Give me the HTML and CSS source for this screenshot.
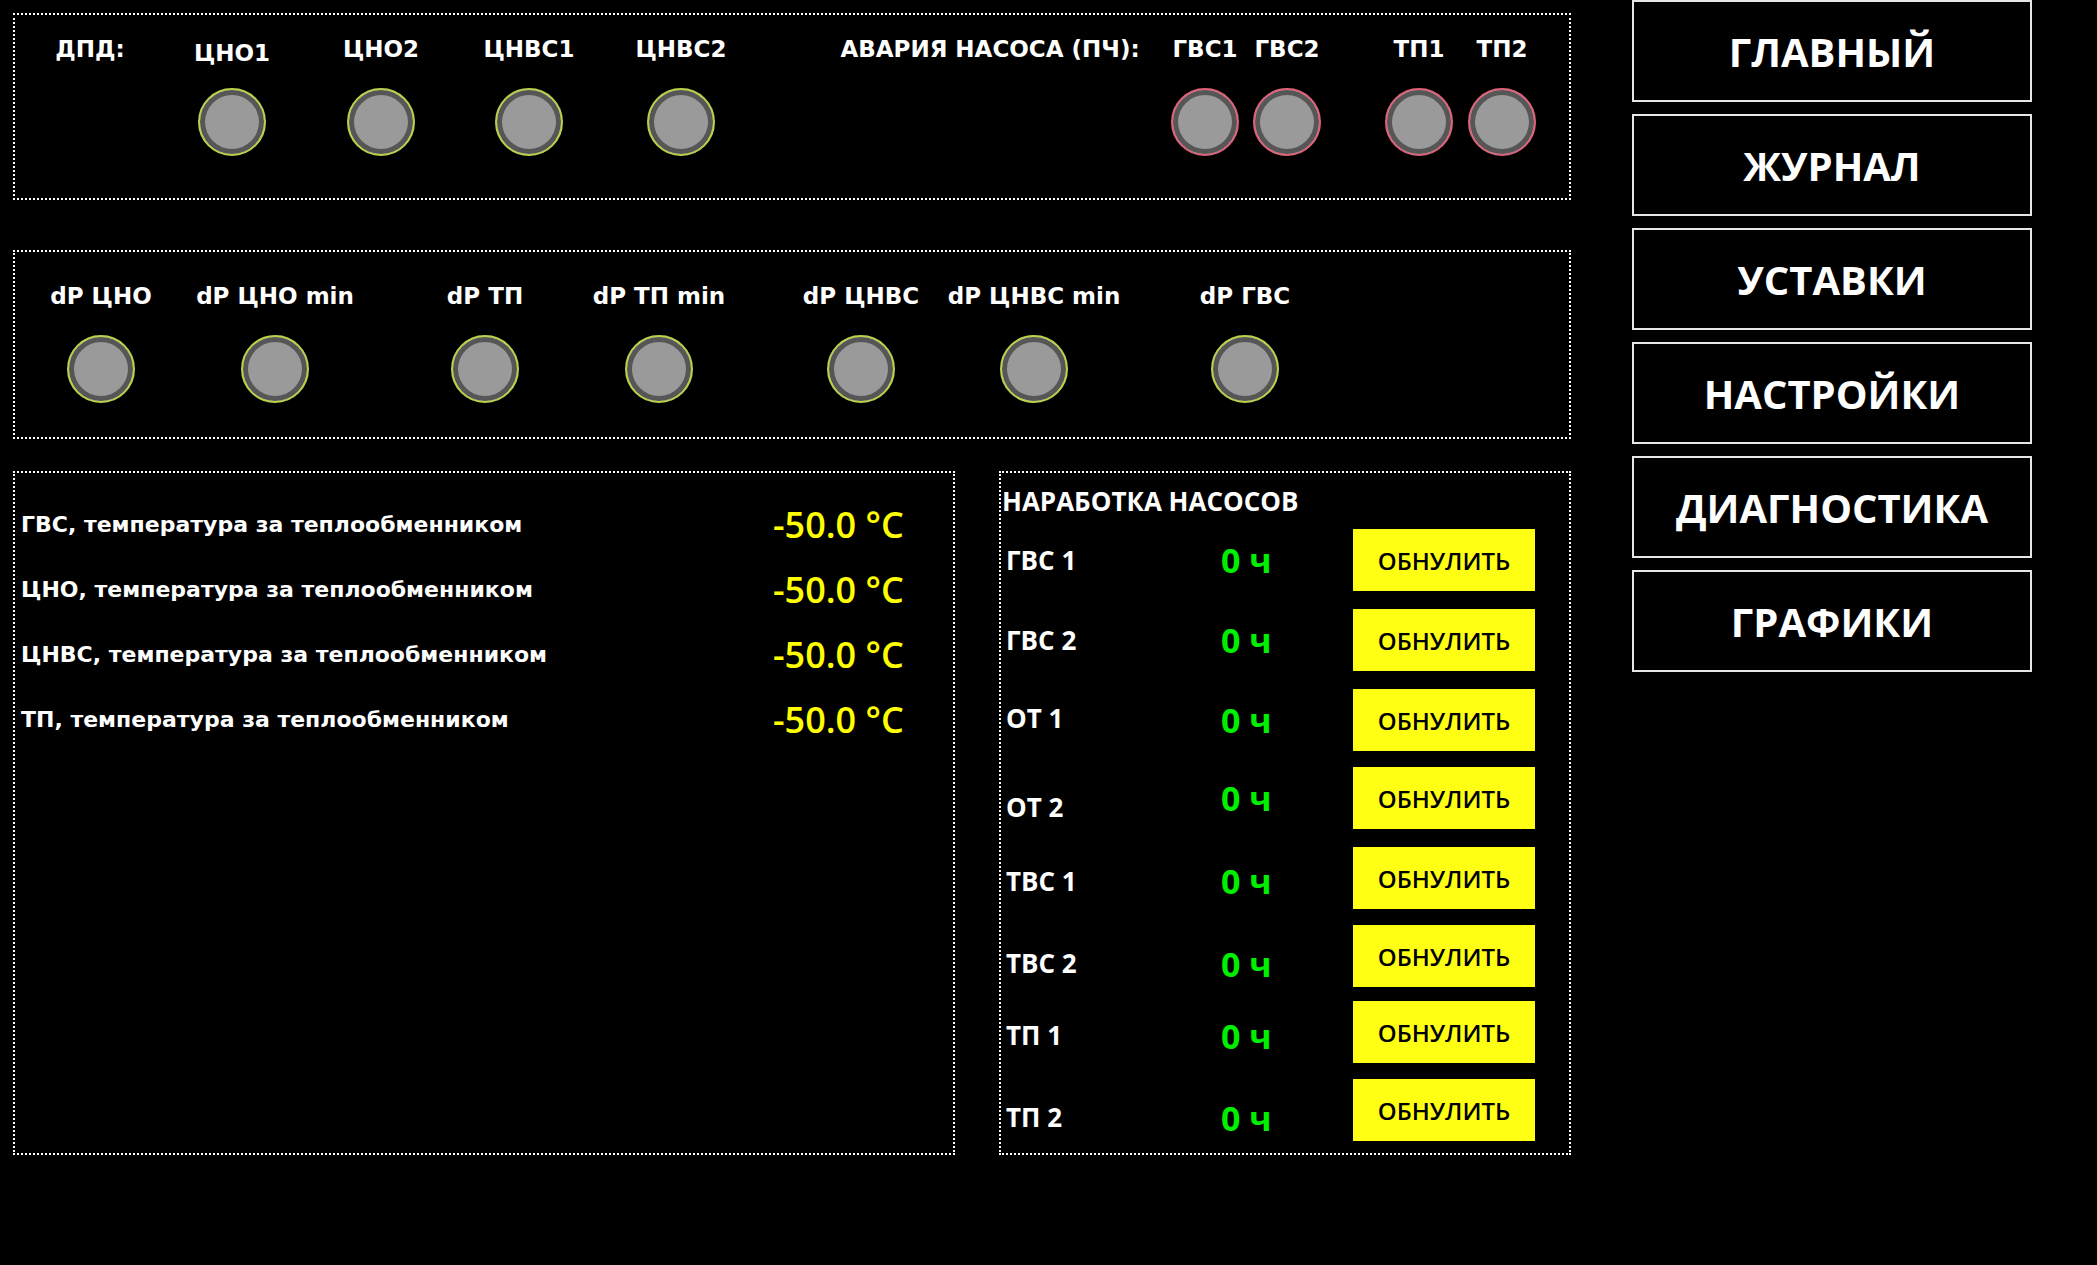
FILE: index.html
```html
<!DOCTYPE html>
<html lang="ru">
<head>
<meta charset="utf-8">
<title>Насосная станция</title>
<link rel="stylesheet" href="styles.css">
</head>
<body>
<div class="screen">
  <div class="main">
    <section class="panel p-top">
      <div class="ind x-dpd"><span class="lbl">ДПД:</span></div>
      <div class="ind x-cno1"><span class="lbl low">ЦНО1</span><span class="lamp"></span></div>
      <div class="ind x-cno2"><span class="lbl">ЦНО2</span><span class="lamp"></span></div>
      <div class="ind x-cnvs1"><span class="lbl">ЦНВС1</span><span class="lamp"></span></div>
      <div class="ind x-cnvs2"><span class="lbl">ЦНВС2</span><span class="lamp"></span></div>
      <div class="ind x-avar"><span class="lbl">АВАРИЯ НАСОСА (ПЧ):</span></div>
      <div class="ind x-gvs1"><span class="lbl">ГВС1</span><span class="lamp alarm"></span></div>
      <div class="ind x-gvs2"><span class="lbl">ГВС2</span><span class="lamp alarm"></span></div>
      <div class="ind x-tp1"><span class="lbl">ТП1</span><span class="lamp alarm"></span></div>
      <div class="ind x-tp2"><span class="lbl">ТП2</span><span class="lamp alarm"></span></div>
    </section>

    <section class="panel p-dp">
      <div class="ind y-1"><span class="lbl">dP ЦНО</span><span class="lamp"></span></div>
      <div class="ind y-2"><span class="lbl">dP ЦНО min</span><span class="lamp"></span></div>
      <div class="ind y-3"><span class="lbl">dP ТП</span><span class="lamp"></span></div>
      <div class="ind y-4"><span class="lbl">dP ТП min</span><span class="lamp"></span></div>
      <div class="ind y-5"><span class="lbl">dP ЦНВС</span><span class="lamp"></span></div>
      <div class="ind y-6"><span class="lbl">dP ЦНВС min</span><span class="lamp"></span></div>
      <div class="ind y-7"><span class="lbl">dP ГВС</span><span class="lamp"></span></div>
    </section>

    <div class="bottom">
      <section class="panel p-temp">
        <div class="t-row"><span class="t-name">ГВС, температура за теплообменником</span><span class="t-val">-50.0 °C</span></div>
        <div class="t-row"><span class="t-name">ЦНО, температура за теплообменником</span><span class="t-val">-50.0 °C</span></div>
        <div class="t-row"><span class="t-name">ЦНВС, температура за теплообменником</span><span class="t-val">-50.0 °C</span></div>
        <div class="t-row"><span class="t-name">ТП, температура за теплообменником</span><span class="t-val">-50.0 °C</span></div>
      </section>

      <section class="panel p-run">
        <div class="run-title">НАРАБОТКА НАСОСОВ</div>
        <div class="run-list">
          <div class="run-row"><span class="run-name">ГВС 1</span><span class="run-val">0 ч</span><button class="run-btn">ОБНУЛИТЬ</button></div>
          <div class="run-row g18"><span class="run-name">ГВС 2</span><span class="run-val">0 ч</span><button class="run-btn">ОБНУЛИТЬ</button></div>
          <div class="run-row g18"><span class="run-name up2">ОТ 1</span><span class="run-val">0 ч</span><button class="run-btn">ОБНУЛИТЬ</button></div>
          <div class="run-row g16"><span class="run-name dn9">ОТ 2</span><span class="run-val">0 ч</span><button class="run-btn">ОБНУЛИТЬ</button></div>
          <div class="run-row g18"><span class="run-name dn3">ТВС 1</span><span class="run-val dn3">0 ч</span><button class="run-btn">ОБНУЛИТЬ</button></div>
          <div class="run-row g16"><span class="run-name dn7">ТВС 2</span><span class="run-val dn8">0 ч</span><button class="run-btn">ОБНУЛИТЬ</button></div>
          <div class="run-row g14"><span class="run-name dn3">ТП 1</span><span class="run-val dn4">0 ч</span><button class="run-btn">ОБНУЛИТЬ</button></div>
          <div class="run-row g16"><span class="run-name dn7">ТП 2</span><span class="run-val dn8">0 ч</span><button class="run-btn">ОБНУЛИТЬ</button></div>
        </div>
      </section>
    </div>
  </div>

  <nav class="nav">
    <a class="nav-btn">ГЛАВНЫЙ</a>
    <a class="nav-btn">ЖУРНАЛ</a>
    <a class="nav-btn">УСТАВКИ</a>
    <a class="nav-btn">НАСТРОЙКИ</a>
    <a class="nav-btn">ДИАГНОСТИКА</a>
    <a class="nav-btn">ГРАФИКИ</a>
  </nav>
</div>
</body>
</html>
```

FILE: styles.css
```css
* { box-sizing: border-box; }

html, body {
  margin: 0;
  background: #000;
}

body {
  width: 2097px;
  height: 1265px;
  overflow: hidden;
  color: #fff;
  font-family: "Open Sans", "DejaVu Sans", sans-serif;
}

.screen {
  display: flex;
  align-items: flex-start;
}

.main {
  width: 1558px;
  margin: 13px 0 0 13px;
  display: flex;
  flex-direction: column;
}

.panel {
  border: 2px dotted #fff;
}

/* ---------- indicator panels ---------- */
.p-top {
  height: 187px;
  display: flex;
  padding-top: 20px;
}

.p-dp {
  height: 189px;
  margin-top: 50px;
  display: flex;
  padding-top: 30px;
}

.ind {
  flex: none;
  width: 80px;
  display: flex;
  flex-direction: column;
  align-items: center;
}

.lbl {
  font-family: "DejaVu Sans", sans-serif;
  font-weight: bold;
  font-size: 23px;
  line-height: 28px;
  height: 32px;
  white-space: nowrap;
  color: #fff;
}

.lbl.low { padding-top: 4px; }

.lamp {
  width: 68px;
  height: 68px;
  margin-top: 21px;
  border-radius: 50%;
  border: 2px solid #b8d24a;
  background: #9a9a9a;
  box-shadow: inset 0 0 0 5px #565656;
}

.lamp.alarm { border-color: #e0627a; }

/* horizontal placement of the indicators (centres of the widgets) */
.x-dpd   { margin-left: 35px; }
.x-cno1  { margin-left: 62px; }
.x-cno2  { margin-left: 69px; }
.x-cnvs1 { margin-left: 68px; }
.x-cnvs2 { margin-left: 72px; }
.x-avar  { margin-left: 229px; }
.x-gvs1  { margin-left: 135px; }
.x-gvs2  { margin-left: 2px; }
.x-tp1   { margin-left: 52px; }
.x-tp2   { margin-left: 3px; }

.y-1 { margin-left: 46px; }
.y-2 { margin-left: 94px; }
.y-3 { margin-left: 130px; }
.y-4 { margin-left: 94px; }
.y-5 { margin-left: 122px; }
.y-6 { margin-left: 93px; }
.y-7 { margin-left: 131px; }

/* ---------- bottom row ---------- */
.bottom {
  display: flex;
  gap: 44px;
  margin-top: 32px;
}

.p-temp {
  width: 942px;
  height: 684px;
  padding: 19px 0 0 6px;
}

.t-row {
  display: flex;
  align-items: center;
  height: 65px;
}

.t-name {
  width: 752px;
  font-family: "DejaVu Sans", sans-serif;
  font-weight: bold;
  font-size: 22px;
  line-height: 28px;
  white-space: nowrap;
}

.t-val {
  font-family: "Open Sans", sans-serif;
  font-weight: 600;
  font-size: 36px;
  line-height: 44px;
  color: #ffff00;
  white-space: nowrap;
}

.p-run {
  width: 572px;
  height: 684px;
  padding-top: 12px;
}

.run-title {
  font-weight: 700;
  font-size: 26px;
  line-height: 32px;
  padding-left: 1px;
  margin-bottom: 12px;
  white-space: nowrap;
}

.run-list {
  display: flex;
  flex-direction: column;
  padding-left: 5px;
}

.g18 { margin-top: 18px; }
.g16 { margin-top: 16px; }
.g14 { margin-top: 14px; }

.run-row {
  display: flex;
  align-items: center;
  height: 62px;
}

.run-name {
  width: 215px;
  font-weight: 700;
  font-size: 26px;
  line-height: 32px;
  white-space: nowrap;
}

.run-val {
  width: 132px;
  font-weight: 700;
  font-size: 34px;
  line-height: 40px;
  color: #00ee00;
  white-space: nowrap;
}

.up2 { margin-bottom: 4px; }
.dn3 { margin-top: 6px; }
.dn4 { margin-top: 8px; }
.dn7 { margin-top: 14px; }
.dn8 { margin-top: 16px; }
.dn9 { margin-top: 18px; }

.run-btn {
  flex: none;
  width: 182px;
  height: 62px;
  margin: 0;
  padding: 0;
  border: none;
  background: #ffff14;
  color: #000;
  font-family: "Open Sans", sans-serif;
  font-weight: 600;
  font-size: 24px;
  display: flex;
  align-items: center;
  justify-content: center;
}

/* ---------- navigation ---------- */
.nav {
  width: 400px;
  margin-left: 61px;
  display: flex;
  flex-direction: column;
  gap: 12px;
}

.nav-btn {
  height: 102px;
  border: 2px solid #e6e6e6;
  display: flex;
  align-items: center;
  justify-content: center;
  font-weight: 700;
  font-size: 40px;
  color: #fff;
  white-space: nowrap;
}
```
